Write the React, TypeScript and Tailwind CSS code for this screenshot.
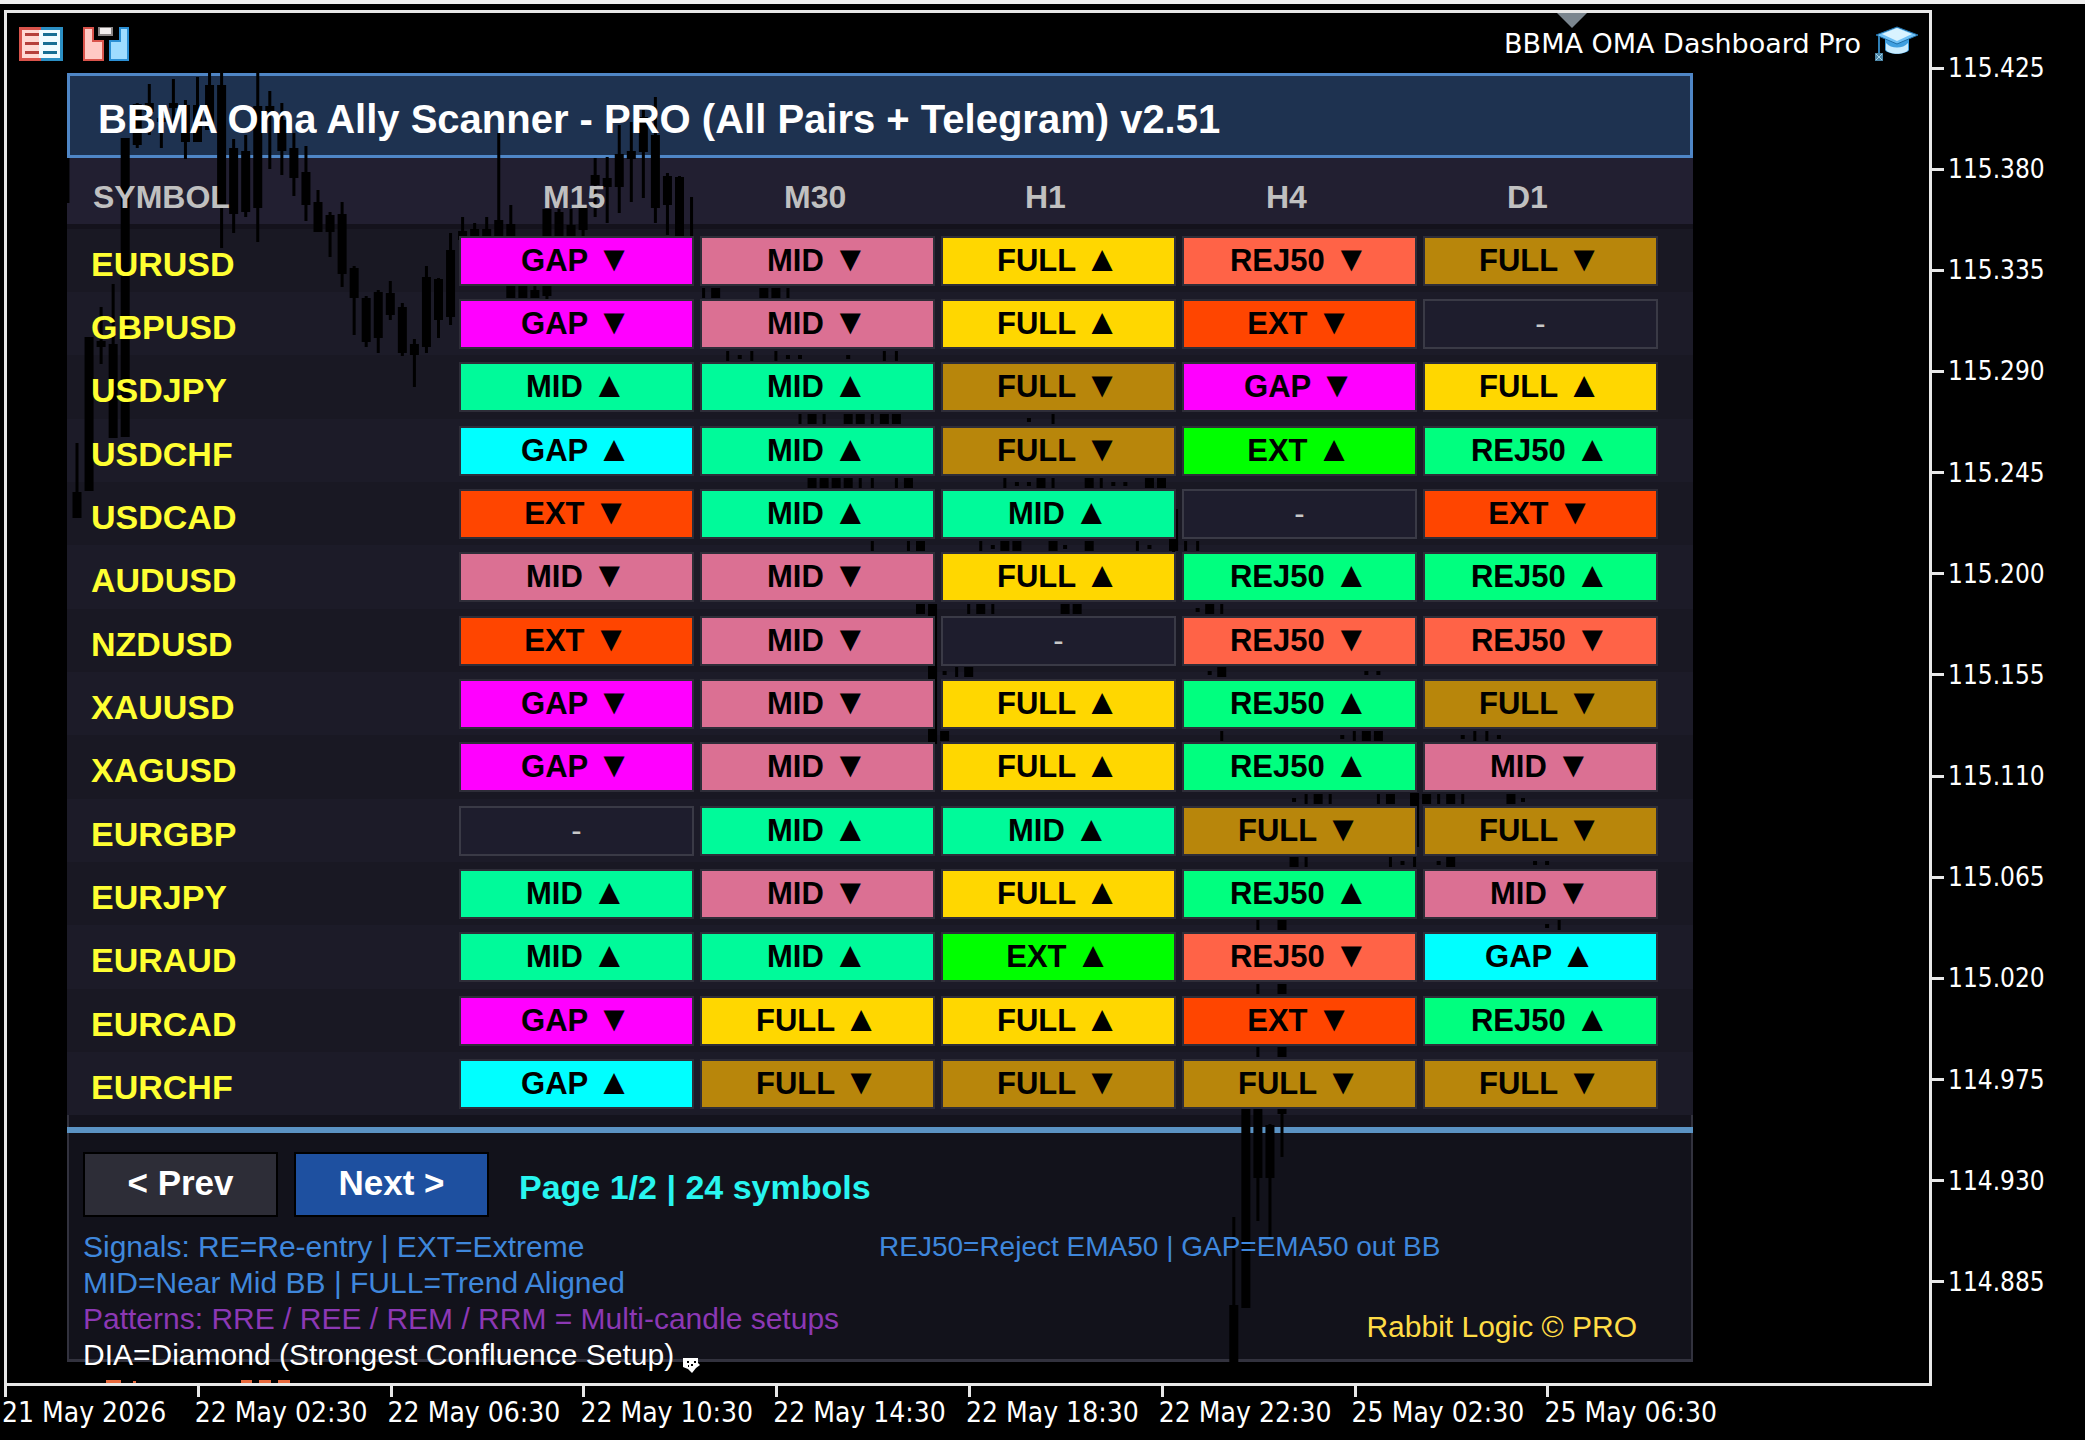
import clsx from "clsx";

type Signal = "GAP" | "MID" | "FULL" | "REJ50" | "EXT";
type Cell = [Signal, "up" | "down"] | null;

const TIMEFRAMES = ["M15", "M30", "H1", "H4", "D1"];

const gapUp: Cell = ["GAP", "up"];
const gapDn: Cell = ["GAP", "down"];
const midUp: Cell = ["MID", "up"];
const midDn: Cell = ["MID", "down"];
const fullUp: Cell = ["FULL", "up"];
const fullDn: Cell = ["FULL", "down"];
const rejUp: Cell = ["REJ50", "up"];
const rejDn: Cell = ["REJ50", "down"];
const extUp: Cell = ["EXT", "up"];
const extDn: Cell = ["EXT", "down"];

const ROWS: { symbol: string; cells: Cell[] }[] = [
  { symbol: "EURUSD", cells: [gapDn, midDn, fullUp, rejDn, fullDn] },
  { symbol: "GBPUSD", cells: [gapDn, midDn, fullUp, extDn, null] },
  { symbol: "USDJPY", cells: [midUp, midUp, fullDn, gapDn, fullUp] },
  { symbol: "USDCHF", cells: [gapUp, midUp, fullDn, extUp, rejUp] },
  { symbol: "USDCAD", cells: [extDn, midUp, midUp, null, extDn] },
  { symbol: "AUDUSD", cells: [midDn, midDn, fullUp, rejUp, rejUp] },
  { symbol: "NZDUSD", cells: [extDn, midDn, null, rejDn, rejDn] },
  { symbol: "XAUUSD", cells: [gapDn, midDn, fullUp, rejUp, fullDn] },
  { symbol: "XAGUSD", cells: [gapDn, midDn, fullUp, rejUp, midDn] },
  { symbol: "EURGBP", cells: [null, midUp, midUp, fullDn, fullDn] },
  { symbol: "EURJPY", cells: [midUp, midDn, fullUp, rejUp, midDn] },
  { symbol: "EURAUD", cells: [midUp, midUp, extUp, rejDn, gapUp] },
  { symbol: "EURCAD", cells: [gapDn, fullUp, fullUp, extDn, rejUp] },
  { symbol: "EURCHF", cells: [gapUp, fullDn, fullDn, fullDn, fullDn] },
];

const CELL_COLORS: Record<Signal, { up: string; down: string }> = {
  GAP: { up: "bg-[#00ffff]", down: "bg-[#ff00ff]" },
  MID: { up: "bg-[#00fa9a]", down: "bg-[#db7093]" },
  FULL: { up: "bg-[#ffd700]", down: "bg-[#b8860b]" },
  REJ50: { up: "bg-[#00ff7f]", down: "bg-[#ff6347]" },
  EXT: { up: "bg-[#00ff00]", down: "bg-[#ff4500]" },
};

const PRICES = [
  "115.425", "115.380", "115.335", "115.290", "115.245", "115.200", "115.155",
  "115.110", "115.065", "115.020", "114.975", "114.930", "114.885",
];

const TIMES = [
  "21 May 2026", "22 May 02:30", "22 May 06:30", "22 May 10:30", "22 May 14:30",
  "22 May 18:30", "22 May 22:30", "25 May 02:30", "25 May 06:30",
];

// [bar index, high, low, body top, body bottom]
const CANDLES: number[][] = [
  [-1, 158, 203, 158, 203],
  [0, 443, 518, 492, 518], [1, 337, 491, 337, 491], [2, 307, 364, 341, 347],
  [3, 284, 438, 344, 438], [4, 138, 437, 138, 437], [5, 103, 148, 104, 145],
  [6, 84, 135, 103, 112], [7, 118, 148, 118, 122], [8, 79, 130, 103, 108],
  [9, 100, 159, 105, 142], [10, 77, 142, 105, 142], [11, 73, 130, 85, 130],
  [12, 73, 248, 85, 208], [13, 139, 233, 148, 214], [14, 135, 217, 151, 212],
  [15, 73, 242, 106, 208], [16, 91, 169, 106, 112], [17, 103, 175, 120, 151],
  [18, 133, 196, 148, 178], [19, 146, 221, 172, 205], [20, 190, 232, 202, 232],
  [21, 212, 257, 215, 232], [22, 202, 287, 214, 274], [23, 266, 335, 268, 298],
  [24, 296, 347, 298, 342], [25, 290, 353, 292, 338], [26, 281, 320, 293, 315],
  [27, 303, 356, 307, 353], [28, 339, 387, 344, 355], [29, 266, 353, 277, 347],
  [30, 278, 338, 279, 320], [31, 233, 325, 250, 317], [32, 217, 240, 231, 240],
  [33, 223, 240, 229, 240], [34, 217, 240, 229, 240], [35, 133, 240, 220, 240],
  [36, 205, 298, 224, 298], [37, 270, 298, 280, 298], [38, 280, 298, 290, 298],
  [39, 209, 299, 209, 296], [40, 209, 240, 212, 240], [41, 209, 240, 225, 240],
  [42, 205, 240, 208, 230], [43, 158, 217, 175, 185], [44, 157, 223, 178, 187],
  [45, 125, 213, 154, 187], [46, 122, 202, 151, 159], [47, 110, 198, 117, 152],
  [48, 97, 223, 135, 208], [49, 173, 235, 176, 205], [50, 176, 240, 177, 240],
  [51, 197, 245, 245, 245], [71, 614, 770, 604, 744], [91, 509, 561, 509, 551],
  [111, 793, 847, 793, 847], [96, 1217, 1362, 1305, 1362],
  [97, 1105, 1308, 1105, 1308], [98, 1105, 1221, 1105, 1178],
  [99, 1124, 1238, 1125, 1178], [100, 1105, 1157, 1105, 1114],
];

// Parts of the chart visible in the gutters between the table rows
const GUTTERS: { y: number; bodies: number[]; wicks: number[]; dots: number[] }[] = [
  { y: 288, bodies: [53, 57, 58], wicks: [52, 59], dots: [] },
  { y: 351, bodies: [], wicks: [54, 56, 58, 67, 68], dots: [55, 59, 60, 64] },
  { y: 414, bodies: [61, 64, 65, 67, 68], wicks: [60, 62, 66, 81], dots: [79] },
  { y: 478, bodies: [61, 62, 63, 64, 69, 80, 84, 89, 90], wicks: [65, 66, 68, 77, 81, 85], dots: [78, 79, 86, 87] },
  { y: 541, bodies: [70, 77, 78, 81, 84, 91], wicks: [66, 69, 75, 88, 92, 93], dots: [76, 82, 89] },
  { y: 604, bodies: [70, 75, 82, 83, 94], wicks: [74, 76, 95], dots: [71, 93] },
  { y: 667, bodies: [71, 74, 95], wicks: [73], dots: [72, 94, 107, 108] },
  { y: 731, bodies: [71, 72, 107, 108], wicks: [95, 106, 116, 117], dots: [105, 115, 118] },
  { y: 794, bodies: [103, 109, 111, 112, 114, 119], wicks: [102, 104, 108, 113, 115], dots: [101, 120] },
  { y: 857, bodies: [101, 114], wicks: [102, 109, 111], dots: [110, 113, 121, 122] },
  { y: 920, bodies: [100], wicks: [98, 123], dots: [122] },
  { y: 984, bodies: [100], wicks: [98], dots: [] },
  { y: 1047, bodies: [100], wicks: [98], dots: [] },
];

const barX = (i: number) => 77 + i * 12.05;

function PriceBars() {
  return (
    <svg
      className="pointer-events-none absolute inset-0 z-10 h-full w-full overflow-visible"
      viewBox="67 73 1626 1289"
      preserveAspectRatio="none"
      aria-hidden="true"
    >
      {CANDLES.map(([i, high, low, top, bottom]) => (
        <g key={i}>
          <rect x={barX(i) - 1.5} y={high} width={3} height={low - high} />
          <rect x={barX(i) - 4.5} y={top} width={9} height={bottom - top} />
        </g>
      ))}
      {GUTTERS.map(({ y, bodies, wicks, dots }) => (
        <g key={y}>
          {bodies.map((i) => (
            <rect key={i} x={barX(i) - 4.5} y={y} width={9} height={10} />
          ))}
          {wicks.map((i) => (
            <rect key={i} x={barX(i) - 1.5} y={y} width={3} height={10} />
          ))}
          {dots.map((i) => (
            <rect key={i} x={barX(i) - 2} y={y + 4} width={4} height={4} />
          ))}
        </g>
      ))}
    </svg>
  );
}

function DepthIcon() {
  return (
    <svg width="44" height="34" viewBox="0 0 44 34" aria-hidden="true">
      <path d="M0 0h22v34H0z" fill="#d9534b" />
      <path d="M22 0h22v34H22z" fill="#2b8fc4" />
      <path d="M3 3h19v28H3z" fill="#ffd9d4" />
      <path d="M20 3h21v28H20z" fill="#f0faff" />
      <path d="M6 6h14v3H6zM6 15h14v3H6zM6 24h14v3H6z" fill="#b5403c" />
      <path d="M24 6h14v3H24zM24 15h14v3H24zM24 24h14v3H24z" fill="#176d94" />
    </svg>
  );
}

function TradeIcon() {
  return (
    <svg width="46" height="34" viewBox="0 0 46 34" aria-hidden="true">
      <path d="M1 1h9v13h10v19H1z" fill="#ffc9c4" stroke="#d9534b" strokeWidth="2" />
      <path d="M45 1h-8v13H27v19h18z" fill="#9fdcff" stroke="#2b8fd4" strokeWidth="2" />
      <path d="M15 0h15v9H15z" fill="#8a8585" />
      <path d="M17 1h11v6H17z" fill="#f2eeee" />
    </svg>
  );
}

function GraduationCapIcon() {
  return (
    <svg width="46" height="36" viewBox="0 0 46 36" aria-hidden="true">
      <path d="M12 12v12c3 5 21 5 24 0V12z" fill="#3f9fe0" />
      <path d="M13 17c5 6 17 6 22 0v7c-4 5-18 5-22 0z" fill="#c9ecff" />
      <path d="M24 1L45 9 24 18 3 9z" fill="#6fc0f5" stroke="#1f6fa8" strokeWidth="1" />
      <path d="M24 2l15 6-15 7-15-7z" fill="#d9f3ff" />
      <path d="M6 10v17" stroke="#2f7fb5" strokeWidth="2" />
      <path d="M2 27h8v8H2z" fill="#4f88a8" />
      <path d="M3 28l6 6M9 28l-6 6" stroke="#a7d4ea" strokeWidth="1" />
    </svg>
  );
}

function SignalCell({ cell }: { cell: Cell }) {
  return (
    <div
      className={clsx(
        "relative z-20 h-[50px] border-2 text-center text-[31px] leading-[45px]",
        cell
          ? ["border-[#2e2d38] font-bold text-black", CELL_COLORS[cell[0]][cell[1]]]
          : "border-[#3a3a46] bg-[#1e1d2d] text-[#c8c8c8]"
      )}
    >
      {cell ? (
        <>
          {cell[0]} <span className="text-[36px] leading-none">{cell[1] === "up" ? "▲" : "▼"}</span>
        </>
      ) : (
        "-"
      )}
    </div>
  );
}

function ScannerTable() {
  return (
    <table className="w-full table-fixed border-separate border-spacing-0">
      <colgroup>
        <col />
        <col className="w-[241px]" />
        <col className="w-[241px]" />
        <col className="w-[241px]" />
        <col className="w-[241px]" />
        <col className="w-[270px]" />
      </colgroup>
      <thead>
        <tr className="h-[71px] bg-[#221f31] text-left text-[32px] leading-9 text-[#c0c0c0]">
          <th scope="col" className="border-b-[5px] border-[#14121c] pt-3 pl-[26px]">
            <span className="relative z-20">SYMBOL</span>
          </th>
          {TIMEFRAMES.map((tf) => (
            <th key={tf} scope="col" className="border-b-[5px] border-[#14121c] pt-3 pl-[84px]">
              <span className="relative z-20">{tf}</span>
            </th>
          ))}
        </tr>
      </thead>
      <tbody>
        {ROWS.map((row) => (
          <tr
            key={row.symbol}
            className="h-[63px] odd:bg-[#191823] even:bg-[#1c1b28] nth-[3n]:h-16"
          >
            <th
              scope="row"
              className="pt-1.5 pl-6 text-left text-[34px] leading-9 font-bold text-[#ffff32]"
            >
              <span className="relative z-20">{row.symbol}</span>
            </th>
            {row.cells.map((cell, i) => (
              <td key={TIMEFRAMES[i]} className="pr-1.5 last:pr-[35px]">
                <SignalCell cell={cell} />
              </td>
            ))}
          </tr>
        ))}
      </tbody>
    </table>
  );
}

function ScannerFooter() {
  return (
    <div className="border-x-2 border-b-[3px] border-[#32323e] bg-[#12121b] pr-[54px] pl-3.5">
      <div className="relative z-20 flex items-center pt-[19px]">
        <button className="h-[65px] w-[195px] border-2 border-black bg-[#2d2d37] pb-1 text-[35px] leading-10 font-bold text-white">
          &lt; Prev
        </button>
        <button className="ml-4 h-[65px] w-[195px] border-2 border-black bg-[#1e50a0] pb-1 text-[35px] leading-10 font-bold text-white">
          Next &gt;
        </button>
        <p className="pt-1 pl-[30px] text-[34px] leading-9 font-bold text-[#28f5f0]">
          Page 1/2 | 24 symbols
        </p>
      </div>
      <div className="relative z-20 -mb-3.5 flex justify-between pt-3 text-[30px] leading-9">
        <div className="whitespace-nowrap">
          <p className="text-[#3f87dc]">Signals: RE=Re-entry | EXT=Extreme</p>
          <p className="text-[#3f87dc]">MID=Near Mid BB | FULL=Trend Aligned</p>
          <p className="text-[#8c38b4]">
            Patterns: RRE / REE / REM / RRM = Multi-candle setups
          </p>
          <p className="flex items-end gap-2 text-white">
            DIA=Diamond (Strongest Confluence Setup)
            <svg width="18" height="16" viewBox="0 0 18 16" aria-hidden="true">
              <path d="M1 1h15v5l2 2-4 3-4 5-4-4-5-2z" fill="#fff" />
              <path d="M5 4h2v2H5zM9 7h2v2H9zM12 4h2v2h-2zM6 8h1v2H6z" fill="#000" />
            </svg>
          </p>
        </div>
        <div className="flex w-[758px] flex-col justify-between pb-7">
          <p className="text-[28px] text-[#3f87dc]">REJ50=Reject EMA50 | GAP=EMA50 out BB</p>
          <p className="text-right text-[#ffdc46]">Rabbit Logic © PRO</p>
        </div>
      </div>
    </div>
  );
}

function ScannerPanel() {
  return (
    <section className="relative mr-[236px] ml-[60px] font-['Liberation_Sans',Arial,sans-serif]">
      <h1 className="border-[3px] border-[#4f86c6] bg-[#1e3250] pt-2 pl-7 text-[40px] leading-[71px] font-bold text-white">
        <span className="relative z-20">
          BBMA Oma Ally Scanner - PRO (All Pairs + Telegram) v2.51
        </span>
      </h1>
      <ScannerTable />
      <div className="h-3 border-x-2 border-[#32323e] bg-[#14131d]" />
      <div className="h-1.5 bg-[#5b93c4]" />
      <ScannerFooter />
      <PriceBars />
    </section>
  );
}

function PriceAxis() {
  return (
    <ul className="flex w-[153px] shrink-0 flex-col justify-between pt-[46px] pb-[86px]">
      {PRICES.map((price) => (
        <li key={price} className="flex items-center gap-1">
          <span className="h-[3px] w-3 bg-[#e8e8e8]" />
          {price}
        </li>
      ))}
    </ul>
  );
}

function TimeAxis() {
  return (
    <ul className="mr-[153px] ml-1 grid grid-cols-10 text-[28px] leading-8 whitespace-nowrap">
      {TIMES.map((time) => (
        <li key={time}>
          <div className="h-[11px] w-[3px] bg-[#e8e8e8]" />
          <span className="-ml-0.5">{time}</span>
        </li>
      ))}
    </ul>
  );
}

export default function App() {
  return (
    <div className="min-h-screen overflow-hidden border-t-4 border-[#f0f0f0] bg-black font-['DejaVu_Sans_Condensed','DejaVu_Sans',sans-serif] text-[26px] leading-9 text-white">
      <div className="flex">
        <main className="relative mt-1.5 ml-1 flex-1 border-[3px] border-[#e8e8e8] pb-[21px]">
          <header className="flex h-[60px] items-center pt-3 pr-2.5 pb-2.5 pl-3">
            <DepthIcon />
            <span className="w-5" />
            <TradeIcon />
            <p className="mr-3 ml-auto font-['DejaVu_Sans',sans-serif] text-[27px]">
              BBMA OMA Dashboard Pro
            </p>
            <GraduationCapIcon />
          </header>
          <ScannerPanel />
          {/* Shift marker on the top edge of the chart */}
          <svg className="absolute top-0 right-[342px]" width="30" height="15" viewBox="0 0 30 15" aria-hidden="true">
            <path d="M0 0h30L15 15z" fill="#7b868f" />
          </svg>
          {/* Trade levels cut off by the bottom edge */}
          <svg className="absolute bottom-0 left-[99px]" width="184" height="3" viewBox="0 0 184 3" aria-hidden="true">
            <path d="M0 0h15v3H0zM27 1h3v2h-3zM135 0h11v3h-11zM153 0h12v3h-12zM172 0h12v3h-12z" fill="#e8693c" />
          </svg>
        </main>
        <PriceAxis />
      </div>
      <TimeAxis />
    </div>
  );
}
